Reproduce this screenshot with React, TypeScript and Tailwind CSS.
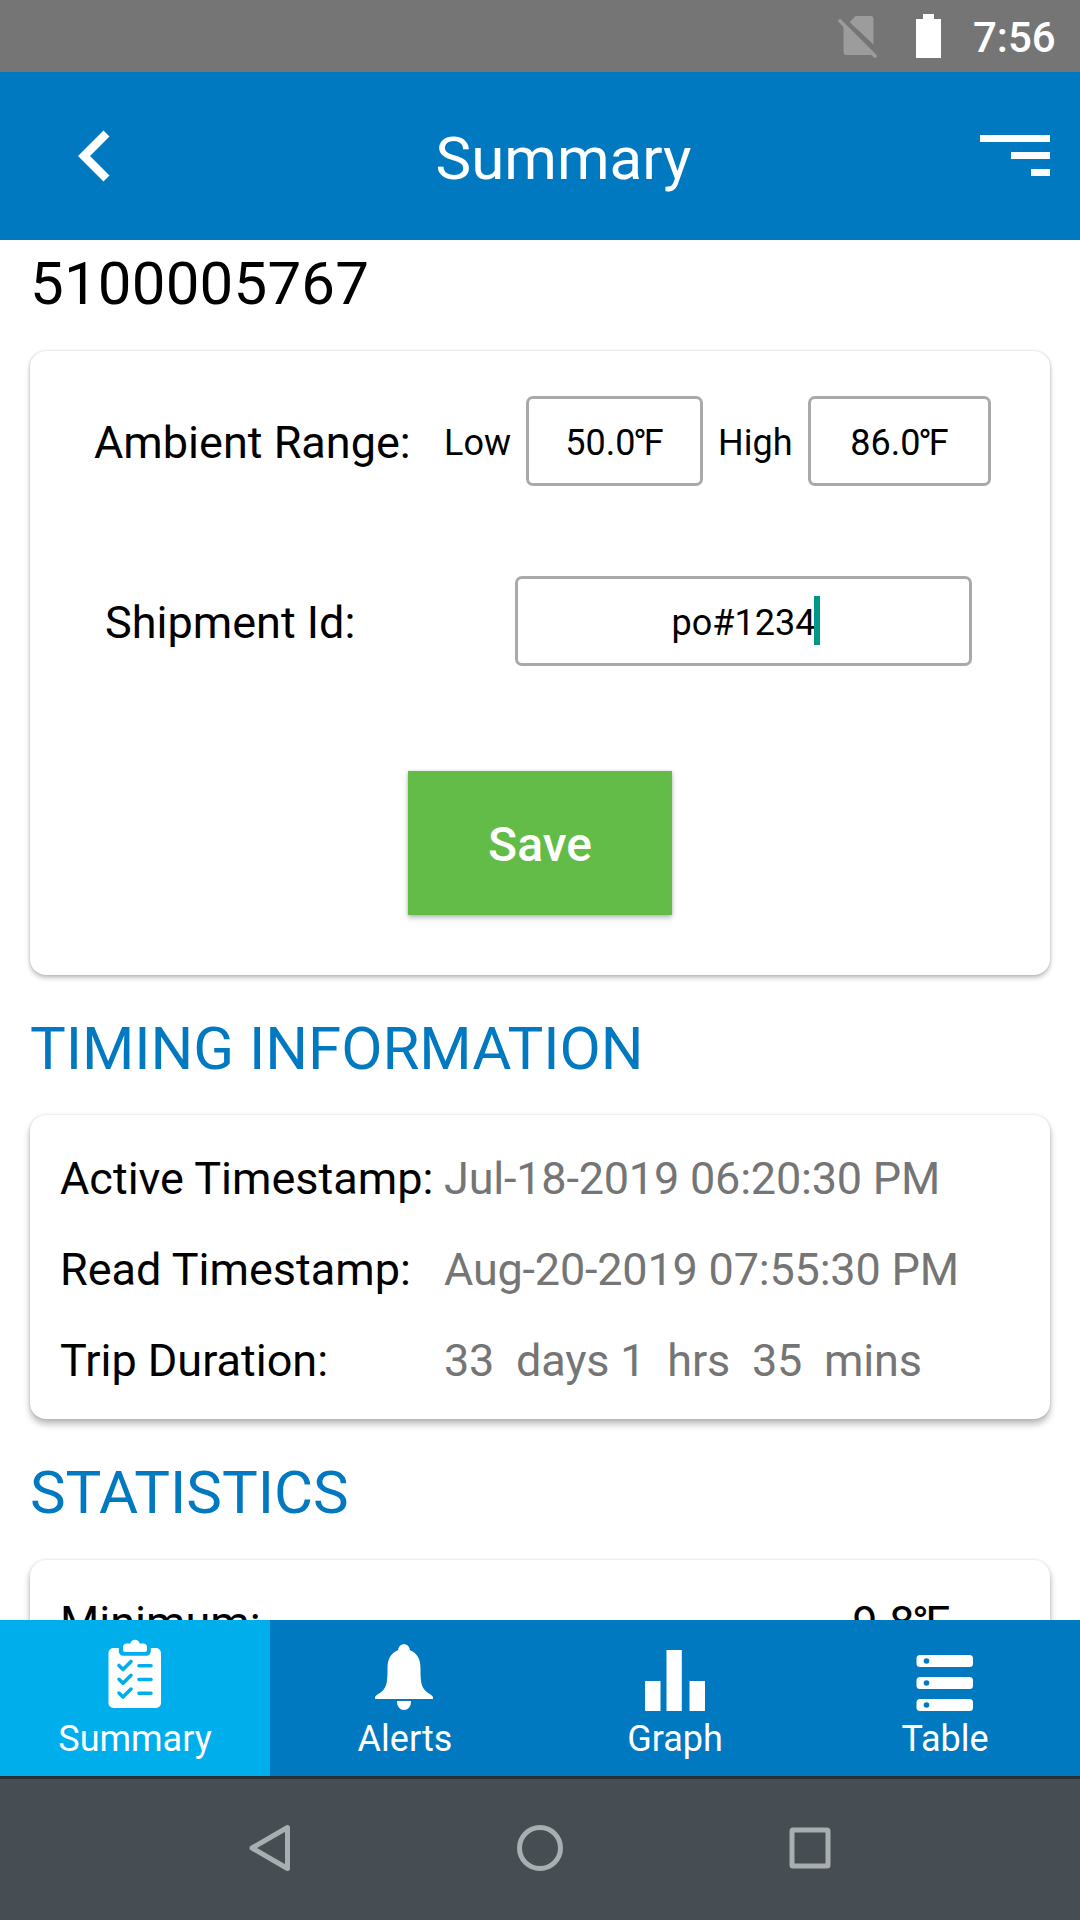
import React from "react";

const timing = [
  { label: "Active Timestamp:", value: "Jul-18-2019 06:20:30 PM" },
  { label: "Read Timestamp:", value: "Aug-20-2019 07:55:30 PM" },
  { label: "Trip Duration:", value: "33  days 1  hrs  35  mins" },
];

function StatusBar() {
  return (
    <div className="flex h-[72px] shrink-0 bg-[#757575] text-white">
      <svg className="ml-[838px] mt-[15px] h-[43px] w-[40px] shrink-0" viewBox="0 0 40 43">
        <path
          d="M5.500 9V37a3 3 0 0 0 3 3h27z M17.500 1H32.500a3 3 0 0 1 3 3V29.500L11.500 7z"
          fill="#9c9c9c"
        />
        <path d="M2 6L37 41" stroke="#9c9c9c" strokeWidth="3.600" strokeLinecap="round" />
      </svg>
      <svg className="ml-[38px] mt-[14px] h-[44px] w-[25px] shrink-0" viewBox="0 0 25 44">
        <path d="M0 5h7V0h11v5h7v39H0z" fill="#fff" />
      </svg>
      <span className="ml-[32px] mt-[13px] text-[42px] leading-[50px] font-medium">7:56</span>
    </div>
  );
}

function Header() {
  return (
    <header className="flex h-[168px] shrink-0 items-center bg-[#0079c1] text-white">
      <svg className="ml-[44px] h-[102px] w-[102px] shrink-0" viewBox="0 0 24 24" fill="currentColor">
        <path d="M15.410 7.410 14 6l-6 6 6 6 1.410-1.410L10.830 12z" />
      </svg>
      <h1 className="flex-1 pl-[1px] pt-[6px] text-center text-[60px] leading-[70px]">Summary</h1>
      <div className="mr-[30px] flex w-[70px] flex-col items-end gap-[10px] pb-[1px]">
        <div className="h-[7px] w-[70px] bg-white" />
        <div className="h-[7px] w-[39px] bg-white" />
        <div className="h-[7px] w-[19px] bg-white" />
      </div>
    </header>
  );
}

// degree sign sits tight between the digit and the F
function Fahrenheit({ value }: { value: string }) {
  return (
    <span>
      {value}
      <span className="-ml-[0.06em] tracking-[-0.08em]">°</span>F
    </span>
  );
}

function Field({ className, children }: { className: string; children: React.ReactNode }) {
  return (
    <div
      className={`flex h-[90px] shrink-0 items-center justify-center rounded-[7px] border-[3px] border-[#a9a9a9] text-[36px] leading-[42px] ${className}`}
    >
      {children}
    </div>
  );
}

function AmbientCard() {
  return (
    <section className="mx-[30px] mt-[32px] h-[624px] shrink-0 rounded-[16px] bg-white pt-[45px] shadow-[0_3px_5px_rgba(0,0,0,0.24),0_0_3px_rgba(0,0,0,0.16)]">
      <div className="flex h-[90px] items-center whitespace-nowrap">
        <span className="w-[414px] shrink-0 pl-[64px] pt-[3px] text-[45px] leading-[53px]">
          Ambient Range:
        </span>
        <span className="w-[82px] shrink-0 pt-[3px] text-[36px] leading-[42px]">Low</span>
        <Field className="w-[177px] pt-[3px]">
          <Fahrenheit value="50.0" />
        </Field>
        <span className="w-[105px] shrink-0 pl-[15px] pt-[3px] text-[36px] leading-[42px]">High</span>
        <Field className="w-[183px] pt-[3px]">
          <Fahrenheit value="86.0" />
        </Field>
      </div>

      <div className="mt-[90px] flex h-[90px] items-center">
        <span className="w-[485px] shrink-0 pl-[75px] pt-[3px] text-[45px] leading-[53px]">
          Shipment Id:
        </span>
        <Field className="w-[457px]">
          <span className="pt-[3px]">po#1234</span>
          {/* text cursor */}
          <span className="-ml-[1px] -mr-[5px] mb-[1px] h-[49px] w-[6px] bg-[#009688]" />
        </Field>
      </div>

      <button className="mx-auto mt-[105px] flex h-[144px] w-[264px] items-center justify-center bg-[#63bc47] pt-[4px] text-[48px] leading-[56px] font-medium text-white shadow-[0_3px_5px_rgba(0,0,0,0.24),0_0_3px_rgba(0,0,0,0.14)]">
        Save
      </button>
    </section>
  );
}

function Heading({ children }: { children: React.ReactNode }) {
  return (
    <h2 className="ml-[30px] mt-[39px] h-[70px] shrink-0 text-[60px] leading-[70px] tracking-[-0.050px] text-[#0079c1]">
      {children}
    </h2>
  );
}

function ClipboardIcon() {
  return (
    <svg className="h-[72px] w-[60px]" viewBox="0 0 60 72">
      <path
        d="M8.500 9h5.300v3.200a4.500 4.500 0 0 0 4.500 4.500h23a4.500 4.500 0 0 0 4.500-4.500V9h5.200a5 5 0 0 1 5 5v50a5 5 0 0 1-5 5H8.500a5 5 0 0 1-5-5V14a5 5 0 0 1 5-5z"
        fill="#fff"
      />
      <path
        d="M22 4.500h3.500a4.600 4.600 0 0 1 9 0H38a4 4 0 0 1 4 4v2a2.500 2.500 0 0 1-2.500 2.500h-19a2.500 2.500 0 0 1-2.500-2.500v-2a4 4 0 0 1 4-4z"
        fill="#fff"
      />
      <g fill="none" stroke="#00aeeb" strokeWidth="3.600" strokeLinecap="round" strokeLinejoin="round">
        <path d="M14 26.500l4 4 8-8M34 26.700h12" />
        <path d="M14 40.300l4 4 8-8M34 40.500h12" />
        <path d="M14 54.100l4 4 8-8M34 54.300h12" />
      </g>
    </svg>
  );
}

function BellIcon() {
  return (
    <svg className="h-[72px] w-[60px]" viewBox="0 0 60 72" fill="#fff">
      <path d="M29 5.300c-3.300 0-5.500 2.200-6 6-7.500 3-10.500 9-10.500 18 0 12-.500 17-4 21.500C5.500 54.500 0 56 0 58.500V60h58v-1.500c0-2.500-5.500-4-8.500-7.700-3.500-4.500-4-9.500-4-21.500 0-9-3-15-10.500-18-.500-3.800-2.700-6-6-6z" />
      <path d="M22 62h14v1.500a7 7.500 0 0 1-14 0z" />
    </svg>
  );
}

function GraphIcon() {
  return (
    <svg className="h-[72px] w-[60px]" viewBox="0 0 60 72" fill="#fff">
      <path d="M0 42h15.500v30H0zM21.500 11h15.300v61H21.500zM44.500 42H60v30H44.500z" />
    </svg>
  );
}

function TableIcon() {
  return (
    <svg className="h-[72px] w-[60px]" viewBox="0 0 60 72">
      {[16, 38, 60].map((y) => (
        <g key={y}>
          <rect x="1.500" y={y} width="56.500" height="12" rx="3.500" fill="#fff" />
          <circle cx="11.500" cy={y + 6} r="2.800" fill="#0079c1" />
        </g>
      ))}
    </svg>
  );
}

const tabs = [
  { label: "Summary", icon: <ClipboardIcon />, active: true },
  { label: "Alerts", icon: <BellIcon />, active: false },
  { label: "Graph", icon: <GraphIcon />, active: false },
  { label: "Table", icon: <TableIcon />, active: false },
];

function TabBar() {
  return (
    <nav className="grid h-[156px] shrink-0 grid-cols-4 bg-[#0079c1] text-white">
      {tabs.map((tab) => (
        <div
          key={tab.label}
          className={`flex flex-col items-center pt-[19px] ${tab.active ? "bg-[#00aeeb]" : ""}`}
        >
          {tab.icon}
          <span className="mt-[7px] text-[36px] leading-[42px]">{tab.label}</span>
        </div>
      ))}
    </nav>
  );
}

function SystemNav() {
  return (
    <div className="flex h-[144px] shrink-0 items-center justify-center gap-[222px] border-t-[3px] border-[#263036] bg-[#464d53] pb-[3px]">
      <svg className="h-[48px] w-[48px]" viewBox="0 0 48 48" fill="none" stroke="#a9aeb1" strokeWidth="5">
        <path d="M6 24L41.500 3.500v41z" strokeLinejoin="round" />
      </svg>
      <svg className="h-[48px] w-[48px]" viewBox="0 0 48 48" fill="none" stroke="#a9aeb1" strokeWidth="5">
        <circle cx="24" cy="24" r="20.500" />
      </svg>
      <svg className="h-[48px] w-[48px]" viewBox="0 0 48 48" fill="none" stroke="#a9aeb1" strokeWidth="5">
        <rect x="6" y="6" width="36" height="36" rx="1" />
      </svg>
    </div>
  );
}

function App() {
  return (
    <div className="flex h-[1920px] w-[1080px] flex-col overflow-hidden bg-white font-[Roboto,sans-serif] text-black">
      <StatusBar />
      <Header />

      <main className="flex h-[1380px] shrink-0 flex-col overflow-hidden">
        <p className="ml-[30px] mt-[9px] h-[70px] shrink-0 text-[60px] leading-[70px] tracking-[0.2px]">
          5100005767
        </p>
        <AmbientCard />

        <Heading>TIMING INFORMATION</Heading>
        <section className="mx-[30px] mt-[31px] flex h-[304px] shrink-0 flex-col gap-[38px] rounded-[16px] bg-white pl-[30px] pt-[37px] shadow-[0_5px_7px_rgba(0,0,0,0.28),0_0_3px_rgba(0,0,0,0.14)]">
          {timing.map((row) => (
            <div key={row.label} className="flex h-[53px] text-[45px] leading-[53px]">
              <span className="w-[384px] shrink-0">{row.label}</span>
              <span className="whitespace-pre tracking-[-0.2px] text-[#757575]">{row.value}</span>
            </div>
          ))}
        </section>

        <Heading>STATISTICS</Heading>
        <section className="mx-[30px] mt-[32px] flex h-[304px] shrink-0 justify-between rounded-[16px] bg-white pl-[30px] pr-[100px] pt-[36px] text-[45px] leading-[53px] shadow-[0_5px_7px_rgba(0,0,0,0.28),0_0_3px_rgba(0,0,0,0.14)]">
          <span>Minimum:</span>
          <Fahrenheit value="9.8" />
        </section>
      </main>

      <TabBar />
      <SystemNav />
    </div>
  );
}

export default App;
